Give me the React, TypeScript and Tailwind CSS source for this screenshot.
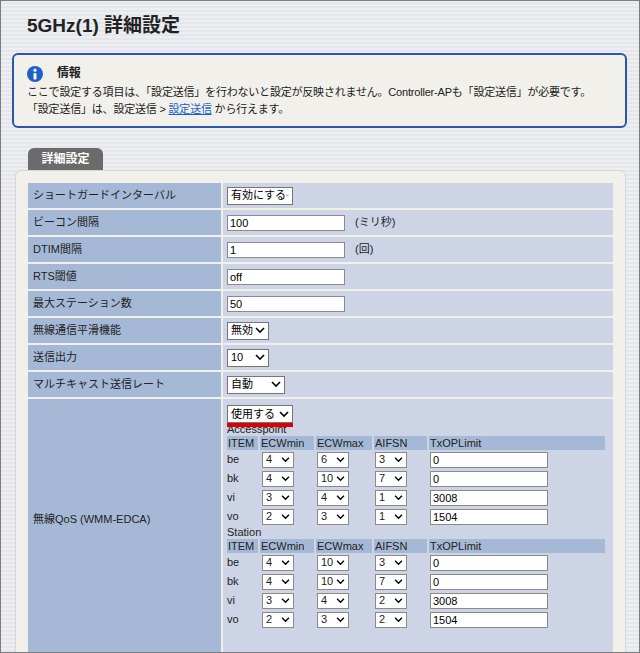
import React from "react";

const F = { fontFamily: '"Liberation Sans", "Noto Sans CJK JP", sans-serif' };

function Sel({ v, w }: { v: string; w: string }) {
  return (
    <div className={`inline-flex items-center justify-between whitespace-nowrap h-[18px] bg-white border border-[#767676] px-[3px] text-[11px] text-black ${w}`}>
      <span>{v}</span>
      <svg width="10" height="7" viewBox="0 0 10 7"><path d="M1 1l4 4 4-4" stroke="#000" strokeWidth="1.6" fill="none" /></svg>
    </div>
  );
}
function Inp({ v, w = "w-[118px]" }: { v: string; w?: string }) {
  return <div className={`h-[16px] bg-white border border-[#8a8a8a] px-[2px] text-[11px] leading-[14px] text-black ${w}`}>{v}</div>;
}
function SmSel({ v }: { v: string }) {
  return (
    <div className="inline-flex items-center justify-between h-[16px] w-[32px] bg-white border border-[#8a8a8a] px-[3px] text-[11px]">
      <span>{v}</span>
      <svg width="9" height="6" viewBox="0 0 10 7"><path d="M1 1l4 4 4-4" stroke="#000" strokeWidth="1.6" fill="none" /></svg>
    </div>
  );
}

function Qos({ title, rows }: { title: string; rows: string[][] }) {
  return (
    <div>
      <div className="text-[11px] leading-[13px] text-[#222]">{title}</div>
      <div className="grid grid-cols-[31px_54px_56px_53px_176px] gap-x-[2px] text-[11px]">
        {["ITEM", "ECWmin", "ECWmax", "AIFSN", "TxOPLimit"].map((h) => (
          <div key={h} className="bg-[#a5b9d6] h-[14px] leading-[14px] pl-[1px]">{h}</div>
        ))}
        {rows.map((r) => (
          <React.Fragment key={r[0]}>
            <div className="h-[19px] flex items-center">{r[0]}</div>
            <div className="h-[19px] flex items-center pl-[2px]"><SmSel v={r[1]} /></div>
            <div className="h-[19px] flex items-center pl-[1px]"><SmSel v={r[2]} /></div>
            <div className="h-[19px] flex items-center pl-[1px]"><SmSel v={r[3]} /></div>
            <div className="h-[19px] flex items-center pl-[1px]"><Inp v={r[4]} /></div>
          </React.Fragment>
        ))}
      </div>
    </div>
  );
}

export default function App() {
  const rows: [string, React.ReactNode][] = [
    ["ショートガードインターバル", <Sel v="有効にする" w="w-[66px]" />],
    ["ビーコン間隔", <div className="flex items-center gap-[10px]"><Inp v="100" /><span>(ミリ秒)</span></div>],
    ["DTIM間隔", <div className="flex items-center gap-[10px]"><Inp v="1" /><span>(回)</span></div>],
    ["RTS閾値", <Inp v="off" />],
    ["最大ステーション数", <Inp v="50" />],
    ["無線通信平滑機能", <Sel v="無効" w="w-[42px]" />],
    ["送信出力", <Sel v="10" w="w-[42px]" />],
    ["マルチキャスト送信レート", <Sel v="自動" w="w-[58px]" />],
  ];
  return (
    <div style={F} className="w-[640px] h-[653px] overflow-hidden border border-[#7d7d7d] bg-[repeating-linear-gradient(0deg,#e4e6ea_0px,#e4e6ea_2px,#eceef1_2px,#eceef1_4px)] text-[#222]">
      <div className="px-[11px]">
        <h1 className="pt-[13px] pl-[15px] text-[19px] font-bold leading-[24px] text-[#222]">5GHz(1) 詳細設定</h1>
        <div className="mt-[15px] mr-[1px] border-2 border-[#2c56ad] rounded-[6px] bg-[#f1f0ea] px-[13px] pt-[10px] pb-[8px] text-[11px] leading-[17px] whitespace-nowrap tracking-[-0.2px]">
          <div className="flex items-center gap-[14px] mb-[2px]">
            <svg width="16" height="16" viewBox="0 0 16 16"><circle cx="8" cy="8" r="8" fill="#1f5fc8" /><circle cx="8" cy="4.2" r="1.6" fill="#fff" /><rect x="6.5" y="7" width="3" height="6.5" rx="1" fill="#fff" /></svg>
            <span className="text-[12px] font-bold">情報</span>
          </div>
          <div>ここで設定する項目は、「設定送信」を行わないと設定が反映されません。Controller-APも「設定送信」が必要です。</div>
          <div>「設定送信」は、設定送信 &gt; <a className="text-[#1a5fcc] underline">設定送信</a> から行えます。</div>
        </div>
        <div className="mt-[20px] ml-[16px] w-[75px] h-[22px] bg-[#6b6b6b] rounded-t-[6px] text-white text-[12px] font-bold flex items-center justify-center">詳細設定</div>
        <div className="ml-[3px] mr-[2px] bg-[#f1f0ea] border border-[#d6d6d6] rounded-t-[6px] pt-[12px] px-[12px] h-[500px]">
          <div className="flex flex-col gap-[2px] text-[11px]">
            {rows.map(([l, c]) => (
              <div key={l} className="flex gap-[2px] h-[25px]">
                <div className="w-[193px] bg-[#a5b9d6] flex items-center pl-[5px]">{l}</div>
                <div className="flex-1 bg-[#ccd4e6] flex items-center pl-[4px]">{c}</div>
              </div>
            ))}
            <div className="flex gap-[2px] h-[260px]">
              <div className="w-[193px] bg-[#a5b9d6] flex items-center pl-[5px] pb-[20px]">無線QoS (WMM-EDCA)</div>
              <div className="flex-1 bg-[#ccd4e6] pl-[4px] pt-[6px]">
                <div className="relative inline-block">
                  <Sel v="使用する" w="w-[66px]" />
                  <div className="absolute left-0 -bottom-[4px] w-[66px] h-[4px] bg-[#e00000]" />
                </div>
                <Qos title="Accesspoint" rows={[["be","4","6","3","0"],["bk","4","10","7","0"],["vi","3","4","1","3008"],["vo","2","3","1","1504"]]} />
                <Qos title="Station" rows={[["be","4","10","3","0"],["bk","4","10","7","0"],["vi","3","4","2","3008"],["vo","2","3","2","1504"]]} />
              </div>
            </div>
          </div>
        </div>
      </div>
    </div>
  );
}
